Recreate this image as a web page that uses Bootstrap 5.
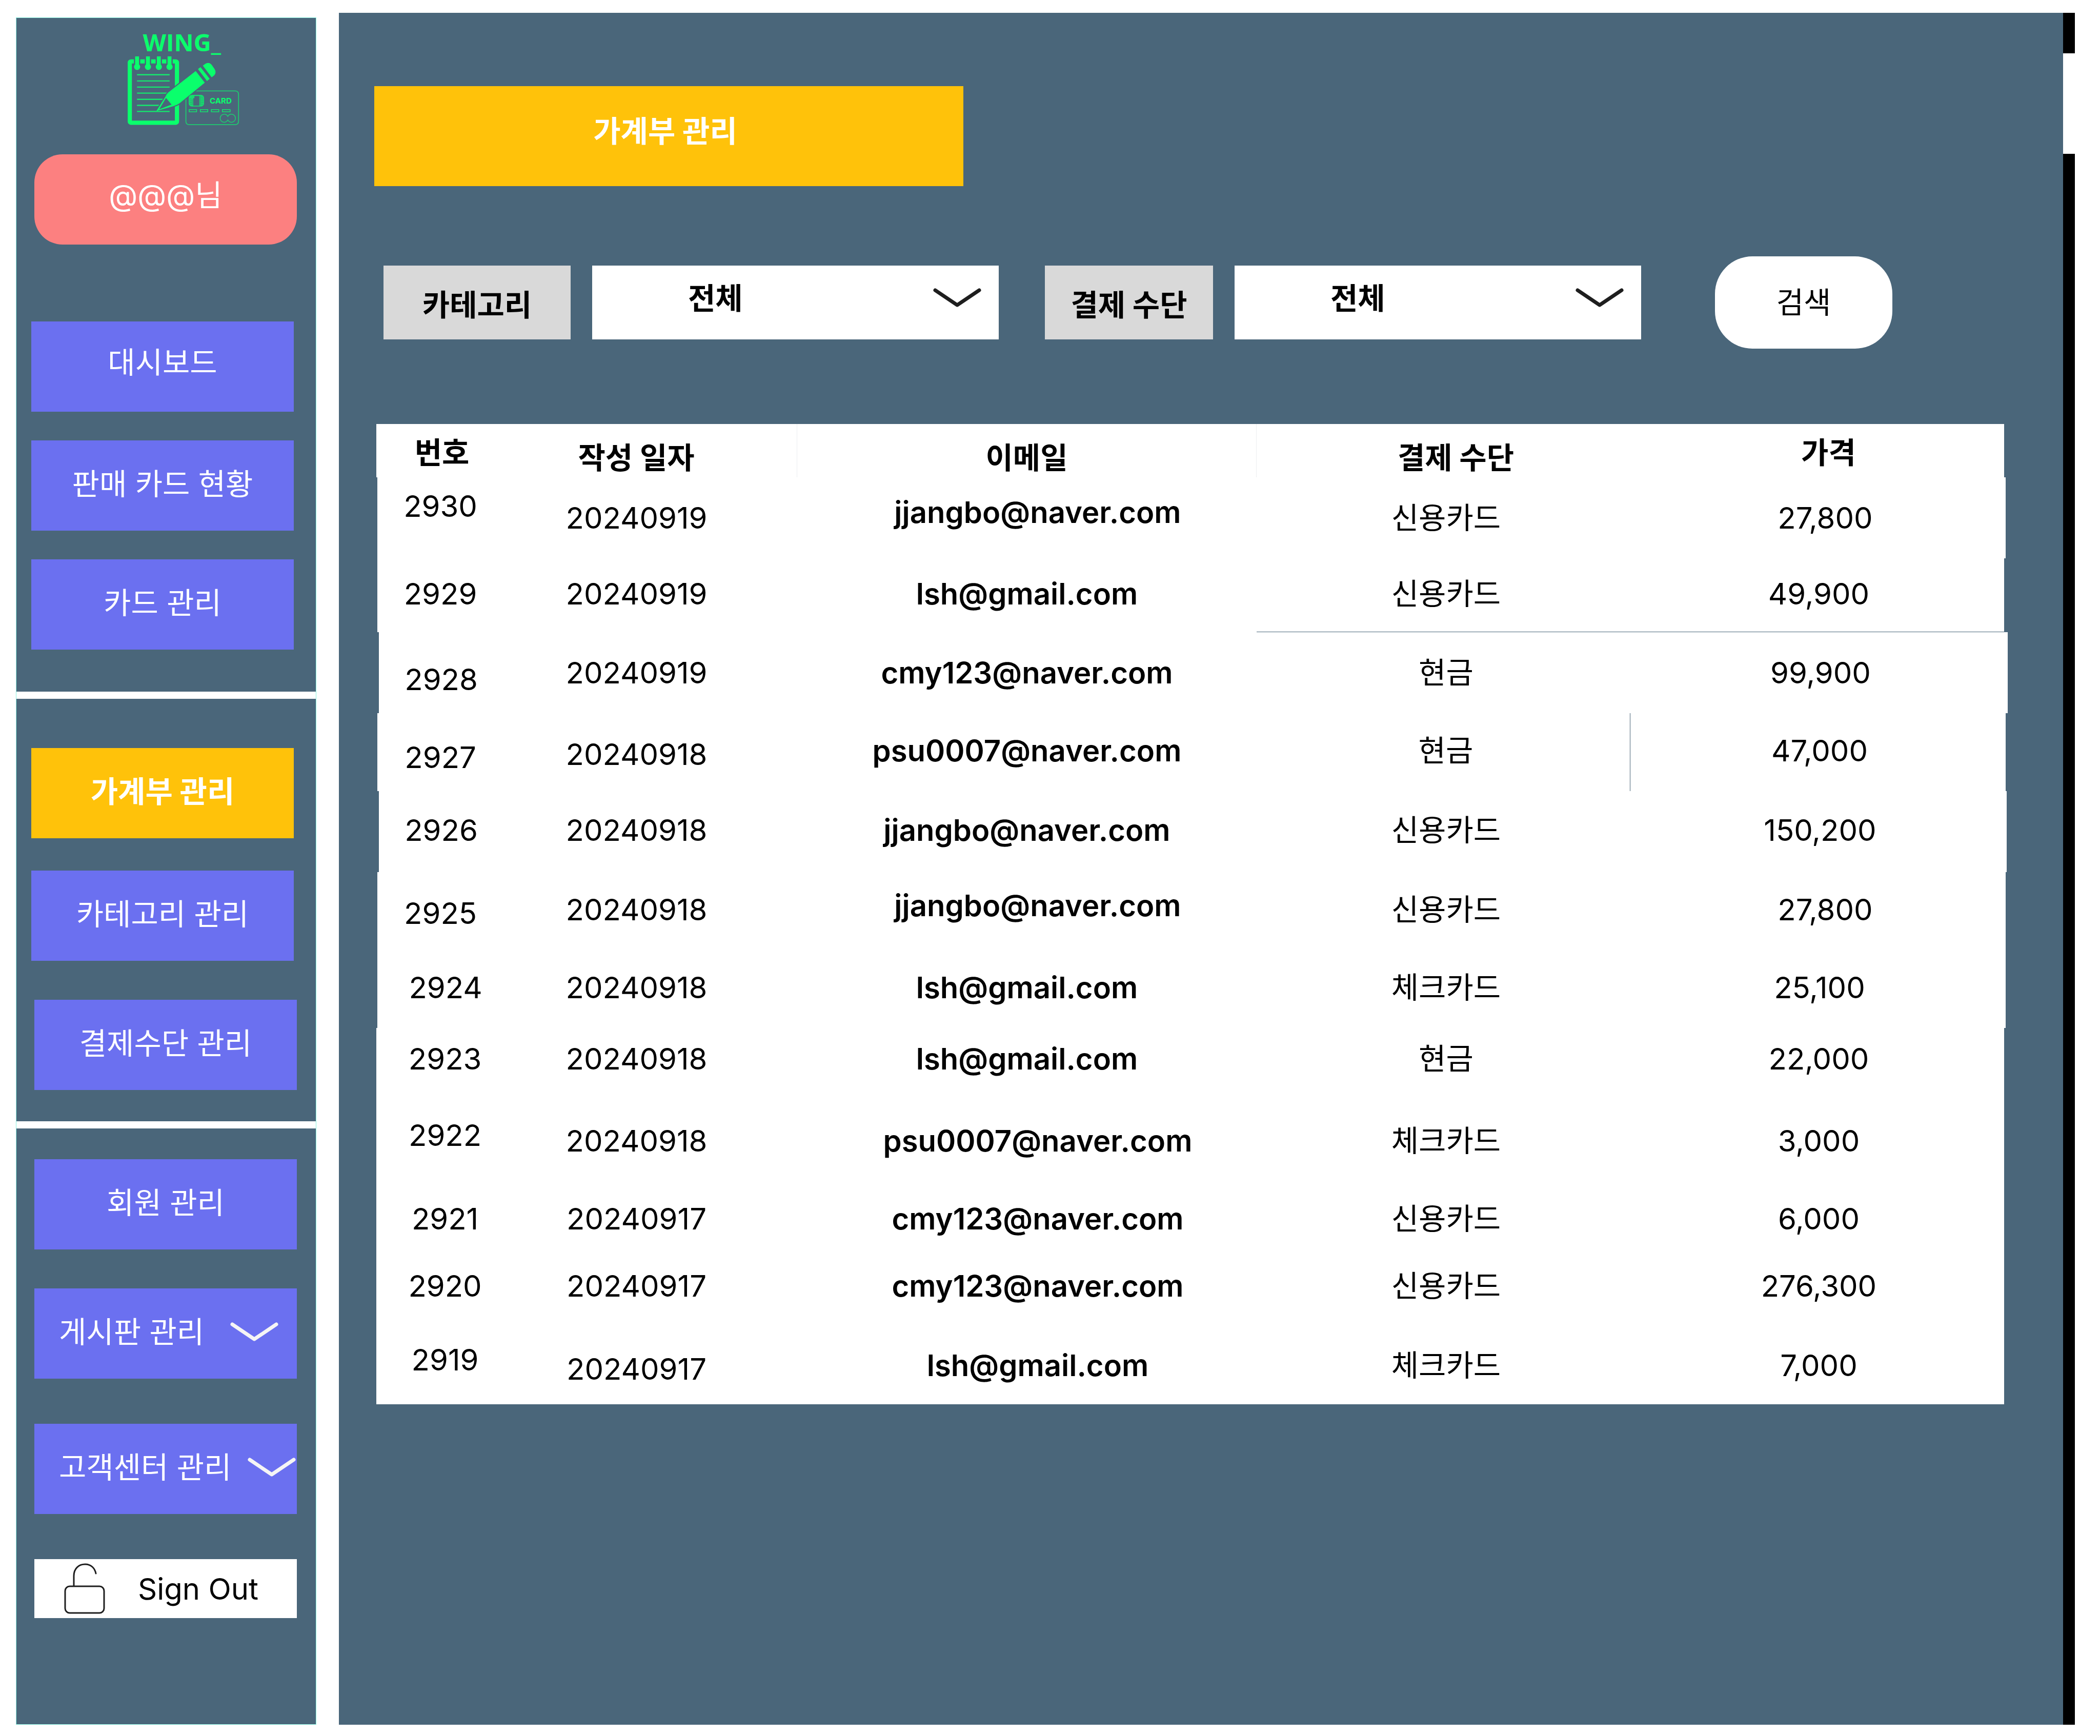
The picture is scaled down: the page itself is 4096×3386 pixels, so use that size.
<!DOCTYPE html>
<html lang="ko">
<head>
<meta charset="utf-8">
<meta name="viewport" content="width=device-width, initial-scale=1">
<title>가계부 관리</title>
<link href="https://cdn.jsdelivr.net/npm/bootstrap@5.3.0/dist/css/bootstrap.min.css" rel="stylesheet">
<style>
  :root { --slate: #4a667a; --violet: #6b70f0; --amber: #ffc20a; --mint: #8cf5e3; }
  body { font-family: Inter, "Noto Sans CJK KR", sans-serif; font-size: 58px; line-height: 70px; color: #000; background: #fff; }
  .page { min-height: 100vh; padding: 25px 49px 22px 31px; }

  /* sidebar */
  .side { width: 586px; margin: 9px 44px 0 0; gap: 14px; background: #fff; border: 1px solid var(--mint); }
  .side-panel { background: var(--slate); padding: 60px 0; }
  .side-top { padding: 11px 0 82px; }
  .side-mid { padding: 96px 0 61px; }
  .logo { width: 291px; height: 218px; margin-left: 186px; }
  .side-btn { width: 512px; height: 176px; margin-left: 29px; padding: 0 0 6px; border: 0; border-radius: 0; font-size: 58px; line-height: 70px; color: #fff; background: var(--violet); display: flex; align-items: center; justify-content: center; }
  .side-btn:hover { color: #fff; background: #5c61e0; }
  .side-btn.current { background: var(--amber); font-weight: 700; }
  .indent { margin-left: 35px; }
  .side-btn.profile { background: #fc8080; border-radius: 55px; margin-top: 37px; }
  .side-btn.raised { padding-bottom: 16px; }
  .side-btn.signout { height: 115px; background: #fff; color: #000; padding: 0 0 0 57px; gap: 63px; justify-content: flex-start; }
  .side-btn.fold { padding-left: 48px; padding-right: 36px; justify-content: space-between; }
  .side-btn.fold-tight { padding-right: 2px; }
  .gap-s { margin-top: 56px; } .gap-m { margin-top: 63px; } .gap-l { margin-top: 76px; } .gap-xl { margin-top: 88px; } .gap-block { margin-top: 150px; }

  /* main area */
  .board { background: var(--slate); padding: 143px 108px 60px 69px; }
  .rail { width: 23px; background: linear-gradient(#000 79px, #fff 79px 275px, #000 275px); }
  .page-title { width: 1149px; height: 195px; margin: 0; padding: 0 14px 20px 0; background: var(--amber); font-size: 58px; line-height: 70px; }
  .filters { margin: 137px 0 147px 18px; }
  .filter-name { height: 144px; padding-top: 10px; background: #d9d9d9; font-weight: 700; }
  .name-wide { width: 365px; } .name-slim { width: 328px; }
  .pick { width: 793px; height: 144px; margin-left: 42px; padding: 0 120px 16px 187px; border: 0; border-radius: 0; font-size: 58px; line-height: 70px; font-weight: 700; color: #000; background-color: #fff;
    background-image: url("data:image/svg+xml,%3Csvg xmlns='http://www.w3.org/2000/svg' viewBox='0 0 94 38'%3E%3Cpath d='M4 4 47 33 90 4' fill='none' stroke='%231e1e1e' stroke-width='7' stroke-linecap='round' stroke-linejoin='round'/%3E%3C/svg%3E");
    background-size: 94px 38px; background-position: right 34px top 44px; }
  .second { margin-left: 90px; }
  .search { width: 346px; height: 180px; margin-left: 144px; border: 0; border-radius: 73px; background: #fff; color: #000; font-size: 58px; line-height: 70px; }

  /* ledger */
  .ledger { width: 3182px; max-width: 100%; table-layout: fixed; border-collapse: separate; border-spacing: 0; background: #fff; text-align: center; margin: 0 -6px 0 4px; }
  .ledger th, .ledger td { padding: 0; vertical-align: middle; border: 0 solid var(--slate); }
  .ledger .mail { font-weight: 600; }
  .ledger .date { padding-right: 62px; }
  .ledger .pay { padding-left: 10px; }
  .ledger .price { padding-left: 6px; }
  .ledger .up td { padding-bottom: 6px; }
  .ledger thead .date, .ledger thead .mail { border-right: 1px solid #eceef0; }
  .ledger thead .pay { padding-left: 48px; } .ledger thead .price { padding-left: 44px; }
  .ledger thead th { padding-top: 28px; font-weight: 700; }
  .ledger thead .head-high { padding-top: 8px; }
  .h-104 { height: 104px; } .h-120 { height: 120px; } .h-144 { height: 144px; } .h-152 { height: 152px; } .h-158 { height: 158px; } .h-200 { height: 200px; }
  .ledger tr .lift.lift { padding-bottom: 22px; } .ledger .lift-lg { padding-bottom: 46px; }
  .ledger .drop { padding-top: 26px; } .ledger .drop-sm { padding-top: 14px; }
  .ledger .mail.aside { padding-left: 42px; } .ledger .price.aside { padding-left: 28px; }
  .ledger tbody .no { padding-right: 8px; } .ledger tbody .no.aside { padding-left: 20px; }
  .l-2 > :first-child { border-left-width: 2px !important; } .l-5 > :first-child { border-left-width: 5px !important; }
  .r-2 > :last-child { border-right-width: 2px !important; } .r-4 > :last-child { border-right-width: 4px !important; } .r-7 > :last-child { border-right-width: 7px !important; }
  .ledger .rule-below { border-bottom-width: 1px; } .ledger .rule-right { border-right: 1px solid #4a667a; }
</style>
</head>
<body>
<div class="page d-flex">
  <aside class="side d-flex flex-column flex-shrink-0">
    <div class="side-panel side-top">
      <svg class="logo d-block" viewBox="0 0 960 720" role="img" aria-label="WING_">
        <g fill="#0aff6c">
          <text x="200" y="178" font-family="Open Sans, sans-serif" font-weight="700" font-size="155">WING_</text>
          <rect x="115.500" y="243.500" width="304" height="395" rx="8" fill="none" stroke="#0aff6c" stroke-width="27"/>
          <g stroke="#4a667a" stroke-width="16" paint-order="stroke">
            <path d="M150 211h25v52a20 20 0 1 1-25 0zM220 211h25v52a20 20 0 1 1-25 0zM290 211h25v52a20 20 0 1 1-25 0zM359 211h25v52a20 20 0 1 1-25 0z"/>
          </g>
          <path d="M162 329.500h210M162 369.500h210M162 409h210M162 448h210M162 488h210M162 527h210" stroke="#14ea6d" stroke-width="8"/>
          <path d="M530 434H794q22 0 22 22V629q0 22-22 22H499q-22 0-22-22V476" fill="none" stroke="#1fcb70" stroke-width="6"/>
          <path d="M540 306 364 444Q352 454 345 472L288 562 398 531Q420 525 436 513L598 381Z" stroke="#4a667a" stroke-width="14" paint-order="stroke"/>
          <path d="M162 566h210" stroke="#14ea6d" stroke-width="8"/>
          <path d="M540 306 364 444Q352 454 345 472L288 562 398 531Q420 525 436 513L598 381Z"/>
          <path d="M349 479 385 522 305 552Z" fill="#4a667a"/>
          <path d="M555 293 571 281 630 356 613 370Z"/>
          <path d="M586 271 602 259Q626 245 645 268L662 293Q675 315 660 333L643 346Z"/>
          <rect x="495" y="459" width="99" height="75" rx="20" fill="#14df6e"/>
          <path d="M526 481h7V468h30v60h-38v-42zM499 486h16M499 498h16M499 510h16M505 521h10M575 474h12M575 486h16M575 498h16M575 510h16M575 521h12M518 488v36M570 466v62" fill="#4a667a" stroke="#4a667a" stroke-width="2"/>
          <text x="630" y="514" font-family="Inter, sans-serif" font-weight="700" font-size="50">CARD</text>
          <g fill="none" stroke="#12e86d" stroke-width="5">
            <path d="M498 554h48v14h-48zM570 554h48v14h-48zM641 554h48v14h-48zM712 554h50v14h-50z"/>
            <path d="M747 598a26 26 0 1 0 0 23 26 26 0 1 0 0-23z" stroke="#1fcb70"/>
          </g>
        </g>
      </svg>
      <a href="#" class="side-btn btn profile raised indent">@@@님</a>
      <a href="#" class="side-btn btn raised gap-block">대시보드</a>
      <a href="#" class="side-btn btn gap-s">판매 카드 현황</a>
      <a href="#" class="side-btn btn gap-s">카드 관리</a>
    </div>
    <div class="side-panel side-mid">
      <a href="#" class="side-btn btn current" aria-current="page">가계부 관리</a>
      <a href="#" class="side-btn btn gap-m">카테고리 관리</a>
      <a href="#" class="side-btn btn indent gap-l">결제수단 관리</a>
    </div>
    <div class="side-panel flex-grow-1">
      <a href="#" class="side-btn btn indent">회원 관리</a>
      <button type="button" class="side-btn btn indent fold gap-l">게시판 관리
        <svg width="94" height="38" viewBox="0 0 94 38" aria-hidden="true"><path d="M4 4 47 33 90 4" fill="none" stroke="#f5f5f5" stroke-width="7" stroke-linecap="round" stroke-linejoin="round"/></svg>
      </button>
      <button type="button" class="side-btn btn indent fold fold-tight gap-xl">고객센터 관리
        <svg width="94" height="38" viewBox="0 0 94 38" aria-hidden="true"><path d="M4 4 47 33 90 4" fill="none" stroke="#f5f5f5" stroke-width="7" stroke-linecap="round" stroke-linejoin="round"/></svg>
      </button>
      <button type="button" class="side-btn btn indent signout gap-xl">
        <svg width="82" height="100" viewBox="0 0 82 100" fill="none" stroke="#1e1e1e" stroke-width="3" stroke-linecap="round" aria-hidden="true"><rect x="3" y="45" width="76" height="52" rx="9"/><path d="M20 44V25C20 10 30 2 42 2S61 10 63 20"/></svg>
        Sign Out
      </button>
    </div>
  </aside>

  <main class="board flex-grow-1">
    <h1 class="page-title d-flex align-items-center justify-content-center fw-bold text-white">가계부 관리</h1>

    <form class="filters d-flex align-items-center">
      <label for="category" class="filter-name name-wide d-flex align-items-center justify-content-center">카테고리</label>
      <select id="category" class="form-select pick"><option>전체</option></select>
      <label for="method" class="filter-name name-slim second d-flex align-items-center justify-content-center">결제 수단</label>
      <select id="method" class="form-select pick"><option>전체</option></select>
      <button type="button" class="btn search">검색</button>
    </form>

    <table class="ledger">
      <colgroup><col style="width:8.05%"><col style="width:17.75%"><col style="width:28.16%"><col style="width:22.91%"><col></colgroup>
      <thead>
        <tr class="h-104 r-7"><th scope="col" class="no head-high">번호</th><th scope="col" class="date">작성 일자</th><th scope="col" class="mail">이메일</th><th scope="col" class="pay">결제 수단</th><th scope="col" class="price head-high">가격</th></tr>
      </thead>
      <tbody>
        <tr class="h-158 l-2 r-4"><td class="no lift-lg">2930</td><td class="date">20240919</td><td class="mail lift aside">jjangbo@naver.com</td><td class="pay">신용카드</td><td class="price aside">27,800</td></tr>
        <tr class="h-144 l-2 r-7 up"><td class="no">2929</td><td class="date">20240919</td><td class="mail">lsh@gmail.com</td><td class="pay rule-below">신용카드</td><td class="price rule-below">49,900</td></tr>
        <tr class="h-158 l-5"><td class="no drop">2928</td><td class="date">20240919</td><td class="mail">cmy123@naver.com</td><td class="pay">현금</td><td class="price">99,900</td></tr>
        <tr class="h-152 l-2 r-4 up"><td class="no drop">2927</td><td class="date drop-sm">20240918</td><td class="mail">psu0007@naver.com</td><td class="pay rule-right">현금</td><td class="price">47,000</td></tr>
        <tr class="h-158 l-5 r-2 up"><td class="no">2926</td><td class="date">20240918</td><td class="mail">jjangbo@naver.com</td><td class="pay">신용카드</td><td class="price">150,200</td></tr>
        <tr class="h-152 l-2 r-4 up"><td class="no drop-sm">2925</td><td class="date">20240918</td><td class="mail lift aside">jjangbo@naver.com</td><td class="pay">신용카드</td><td class="price aside">27,800</td></tr>
        <tr class="h-152 l-2 r-4 up"><td class="no aside">2924</td><td class="date">20240918</td><td class="mail">lsh@gmail.com</td><td class="pay">체크카드</td><td class="price">25,100</td></tr>
        <tr class="h-120 r-7"><td class="no aside">2923</td><td class="date">20240918</td><td class="mail">lsh@gmail.com</td><td class="pay">현금</td><td class="price">22,000</td></tr>
        <tr class="h-200 r-7"><td class="no aside lift">2922</td><td class="date">20240918</td><td class="mail aside">psu0007@naver.com</td><td class="pay">체크카드</td><td class="price">3,000</td></tr>
        <tr class="h-104 r-7"><td class="no aside">2921</td><td class="date">20240917</td><td class="mail aside">cmy123@naver.com</td><td class="pay">신용카드</td><td class="price">6,000</td></tr>
        <tr class="h-158 r-7"><td class="no aside">2920</td><td class="date">20240917</td><td class="mail aside">cmy123@naver.com</td><td class="pay">신용카드</td><td class="price">276,300</td></tr>
        <tr class="h-152 r-7"><td class="no aside lift">2919</td><td class="date drop-sm">20240917</td><td class="mail aside">lsh@gmail.com</td><td class="pay">체크카드</td><td class="price">7,000</td></tr>
      </tbody>
    </table>
  </main>
  <div class="rail flex-shrink-0"></div>
</div>
<script src="https://cdn.jsdelivr.net/npm/bootstrap@5.3.0/dist/js/bootstrap.bundle.min.js"></script>
</body>
</html>
